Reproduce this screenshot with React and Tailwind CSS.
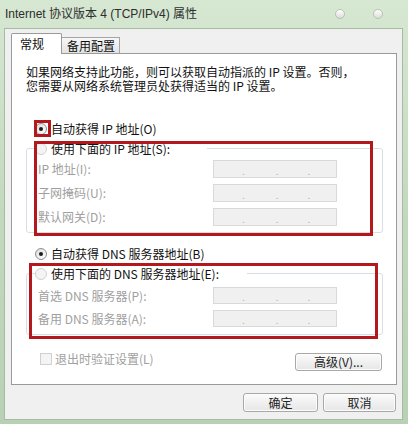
import React from 'react';

const FONT = { fontFamily: '"Noto Sans CJK SC", "Liberation Sans", sans-serif' };
const TITLE_FONT = { fontFamily: '"Liberation Sans", "Noto Sans CJK SC", sans-serif' };

// round option button, the dot shows the chosen one
const Radio = ({ checked, disabled }) => (
  <div
    className={`w-[12px] h-[12px] rounded-full border flex items-center justify-center shrink-0 ${
      disabled ? 'border-[#d2d2d2] bg-[#f4f4f4]' : 'border-[#8e8f8f] bg-gradient-to-br from-[#dcdcdc] to-white'
    }`}
  >
    {checked && <div className="w-[4px] h-[4px] rounded-full bg-[#1d1d1d]" />}
  </div>
);

const IpBox = ({ h }) => (
  <div className={`w-[124px] ${h} bg-[#f0f0f0] border border-[#d9d9d9] flex items-end pb-[1px] text-[10px] leading-[10px] text-[#b4b4b4]`}>
    <span className="ml-[28px]">.</span>
    <span className="ml-[31px]">.</span>
    <span className="ml-[29px]">.</span>
  </div>
);

const Row = ({ label, h, mt }) => (
  <div className={`flex items-center pl-[11px] ${mt}`}>
    <span className="w-[175px] text-[#a0a0a0] whitespace-nowrap">{label}</span>
    <IpBox h={h} />
  </div>
);

const Button = ({ children, w, h = 'h-[19px]' }) => (
  <div
    className={`${w} ${h} rounded-[3px] border border-[#a8a8a8] bg-gradient-to-b from-[#fbfbfb] to-[#e6e6e6] flex items-center justify-center text-[#222] shadow-[inset_0_0_0_1px_#fcfcfc]`}
  >
    {children}
  </div>
);

export default function App() {
  return (
    <div
      className="relative w-[408px] h-[424px] overflow-hidden bg-gradient-to-b from-[#d6e7d2] via-[#c3d9be] to-[#b8d0b3] flex flex-col text-[12px] leading-[16px] text-[#111]"
      style={FONT}
    >
      {/* title bar */}
      <div className="h-[28px] flex items-center pl-[5px] shrink-0">
        <span className="text-[12px] text-[#2e2e2e] whitespace-nowrap" style={TITLE_FONT}>
          Internet 协议版本 4 (TCP/IPv4) 属性
        </span>
        <div className="flex-1" />
        <div className="w-[10px] h-[10px] rounded-full bg-gradient-to-b from-white to-[#dcdcdc] border border-[#b5c4b2] mr-[28px]" />
        <div className="w-[10px] h-[10px] rounded-full bg-gradient-to-b from-white to-[#dcdcdc] border border-[#b5c4b2] mr-[25px]" />
      </div>

      {/* client area */}
      <div className="ml-[4px] mr-[5px] h-[392px] bg-[#f0f0f0] border border-[#a6bca2] pt-[4px] pl-[6px] pr-[5px]">
        {/* tabs */}
        <div className="flex items-end h-[20px]">
          <div className="relative z-10 w-[51px] h-[21px] -mb-[1px] bg-white border border-b-0 border-[#9a9a9a] rounded-t-[2px] pl-[8px] pt-[2px] text-[12px] text-[#111]">
            常规
          </div>
          <div className="w-[58px] h-[16px] border-t border-r border-[#a5a5a5] bg-gradient-to-b from-[#f7f7f7] to-[#e3e3e3] pl-[5px] leading-[16px] text-[12px] text-[#111]">
            备用配置
          </div>
        </div>

        {/* tab page */}
        <div className="h-[332px] bg-white border border-[#9a9a9a] flex flex-col">
          <div className="mt-[11px] pl-[14px] leading-[14px] whitespace-nowrap">
            如果网络支持此功能，则可以获取自动指派的 IP 设置。否则，
            <br />
            您需要从网络系统管理员处获得适当的 IP 设置。
          </div>

          <div className="mt-[28px] h-[16px] pl-[23px] flex items-center gap-[4px] whitespace-nowrap">
            <Radio checked />
            <span>自动获得 IP 地址(O)</span>
          </div>

          {/* group: fixed IP */}
          <div className="mt-[11px] ml-[14px] mr-[13px] h-[85px] border border-[#d5dfe5] rounded-[3px] flex flex-col">
            <div className="-mt-[8px] ml-[8px] w-[172px] h-[16px] bg-white flex items-center gap-[4px] whitespace-nowrap">
              <Radio disabled />
              <span>使用下面的 IP 地址(S):</span>
            </div>
            <Row label="IP 地址(I):" h="h-[18px]" mt="mt-[3px]" />
            <Row label="子网掩码(U):" h="h-[18px]" mt="mt-[6px]" />
            <Row label="默认网关(D):" h="h-[18px]" mt="mt-[6px]" />
          </div>

          <div className="mt-[13px] h-[16px] pl-[23px] flex items-center gap-[4px] whitespace-nowrap">
            <Radio checked />
            <span>自动获得 DNS 服务器地址(B)</span>
          </div>

          {/* group: fixed DNS */}
          <div className="mt-[11px] ml-[14px] mr-[13px] h-[62px] border border-[#d5dfe5] rounded-[3px] flex flex-col">
            <div className="-mt-[8px] ml-[8px] w-[212px] h-[16px] bg-white flex items-center gap-[4px] whitespace-nowrap">
              <Radio disabled />
              <span>使用下面的 DNS 服务器地址(E):</span>
            </div>
            <Row label="首选 DNS 服务器(P):" h="h-[17px]" mt="mt-[5px]" />
            <Row label="备用 DNS 服务器(A):" h="h-[17px]" mt="mt-[6px]" />
          </div>

          <div className="mt-[17px] flex items-start justify-between pr-[14px]">
            <div className="pl-[28px] flex items-center gap-[3px] h-[13px] whitespace-nowrap">
              <div className="w-[12px] h-[12px] border border-[#d0d0d0] bg-[#f4f4f4]" />
              <span className="text-[#a0a0a0]">退出时验证设置(L)</span>
            </div>
            <div className="mt-[1px]">
              <Button w="w-[87px]" h="h-[18px]">高级(V)...</Button>
            </div>
          </div>
        </div>

        {/* dialog buttons */}
        <div className="mt-[8px] flex justify-end gap-[5px] pr-[1px]">
          <Button w="w-[75px]">确定</Button>
          <Button w="w-[73px]">取消</Button>
        </div>
      </div>

      {/* red annotation boxes */}
      <div className="absolute left-[34px] top-[120px] w-[17px] h-[17px] border-[3px] border-[#b3191c]" />
      <div className="absolute left-[34px] top-[141px] w-[339px] h-[95px] border-[3px] border-[#b3191c]" />
      <div className="absolute left-[29px] top-[263px] w-[349px] h-[76px] border-[3px] border-[#b3191c]" />
    </div>
  );
}
